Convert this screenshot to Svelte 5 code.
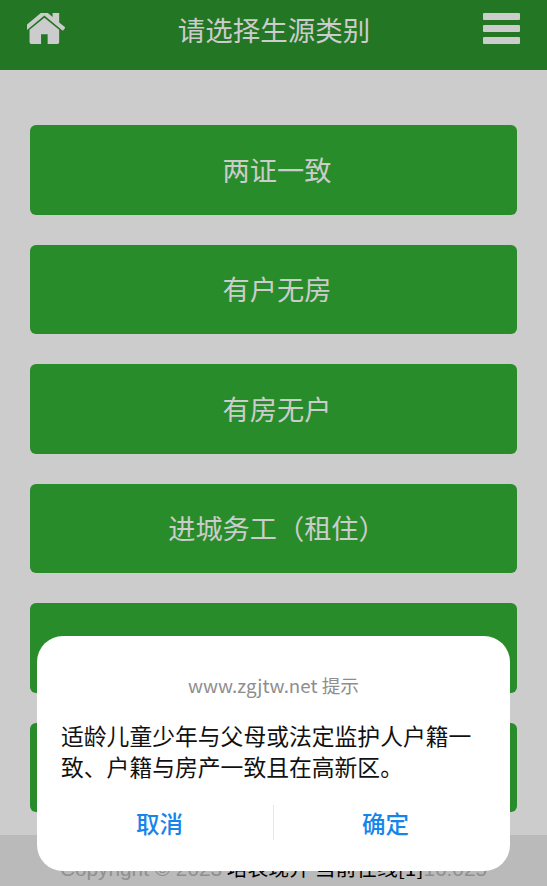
<script>
  const options = ['两证一致', '有户无房', '有房无户', '进城务工（租住）', '', ''];
</script>

<div class="page">
  <header class="top">
    <svg class="home" viewBox="161 330 1470 1206" aria-hidden="true"><path d="M1408 992v480q0 26-19 45t-45 19h-384v-384h-256v384h-384q-26 0-45-19t-19-45v-480q0-1 .5-3t.5-3l575-474 575 474q1 2 1 6zm223-69l-62 74q-8 9-21 11h-3q-13 0-21-7l-692-577-692 577q-12 8-24 7-13-2-21-11l-62-74q-8-10-7-23.500t11-21.500l719-599q32-26 76-26t76 26l244 204v-195q0-14 9-23t23-9h192q14 0 23 9t9 23v408l219 182q10 8 11 21.500t-7 23.500z"/></svg>
    <h1>请选择生源类别</h1>
    <div class="menu" aria-hidden="true"><span></span><span></span><span></span></div>
  </header>

  <main class="list">
    {#each options as o}
      <button class="opt">{o}</button>
    {/each}
  </main>

  <footer class="foot">
    <span class="lat">Copyright © 2023</span> <span class="cjk">培表现并 当前在线[1]</span><span class="lat">16:025</span>
  </footer>

  <div class="dialog">
    <p class="origin">www.zgjtw.net 提示</p>
    <p class="msg">适龄儿童少年与父母或法定监护人户籍一致、户籍与房产一致且在高新区。</p>
    <div class="actions">
      <button class="act">取消</button>
      <i class="sep"></i>
      <button class="act">确定</button>
    </div>
  </div>
</div>

<style>
  :global(body) {
    margin: 0;
    background: #cccccc;
  }
  .page {
    position: relative;
    height: 886px;
    overflow: hidden;
    display: flex;
    flex-direction: column;
    font-family: "Noto Sans CJK SC", "Liberation Sans", sans-serif;
  }
  .top {
    flex: none;
    height: 70px;
    background: #227624;
    display: flex;
    justify-content: space-between;
    align-items: flex-start;
    padding: 13px 27px 0;
    box-sizing: border-box;
  }
  .home {
    width: 38px;
    height: 31px;
    fill: #cccccc;
  }
  h1 {
    margin: -1px 0 0;
    font-size: 27.500px;
    line-height: 34px;
    font-weight: 400;
    color: #cccccc;
  }
  .menu {
    display: flex;
    flex-direction: column;
    gap: 5.500px;
  }
  .menu span {
    display: block;
    width: 37px;
    height: 6.500px;
    border-radius: 1px;
    background: #cccccc;
  }
  .list {
    flex: none;
    padding: 55px 30px 0;
    display: flex;
    flex-direction: column;
    gap: 30px;
  }
  .opt {
    height: 89.500px;
    border: 0;
    padding: 0 0 2px 7px;
    border-radius: 6px;
    background: #298c2b;
    color: #cccccc;
    font: inherit;
    font-size: 27.200px;
  }
  .foot {
    position: absolute;
    left: 0;
    right: 0;
    bottom: 0;
    height: 51px;
    background: #bababa;
    box-sizing: border-box;
    padding-top: 19px;
    text-align: center;
    font-size: 20.800px;
    line-height: 26px;
    color: #000;
    white-space: nowrap;
  }
  .lat {
    font-family: "Liberation Sans", sans-serif;
    color: #8f8f8f;
  }
  .dialog {
    position: absolute;
    left: 37px;
    top: 636px;
    width: 473px;
    height: 235px;
    box-sizing: border-box;
    background: #fff;
    border-radius: 26px;
    padding: 35px 24px 0;
  }
  .origin {
    margin: 0;
    text-align: center;
    font-size: 18.700px;
    line-height: 28px;
    color: #8e8e8e;
  }
  .msg {
    margin: 21px 0 0;
    font-size: 22.800px;
    line-height: 31px;
    color: #111;
  }
  .actions {
    display: grid;
    grid-template-columns: 1fr 1px 1fr;
    align-items: center;
    margin: 23px -15px 0;
    height: 35px;
  }
  .act {
    border: 0;
    background: none;
    padding: 0;
    font: inherit;
    font-size: 23.500px;
    font-weight: 500;
    color: #1585ec;
  }
  .act:last-child {
    padding-right: 4px;
  }
  .sep {
    height: 35px;
    background: #e6e6e6;
  }
</style>
